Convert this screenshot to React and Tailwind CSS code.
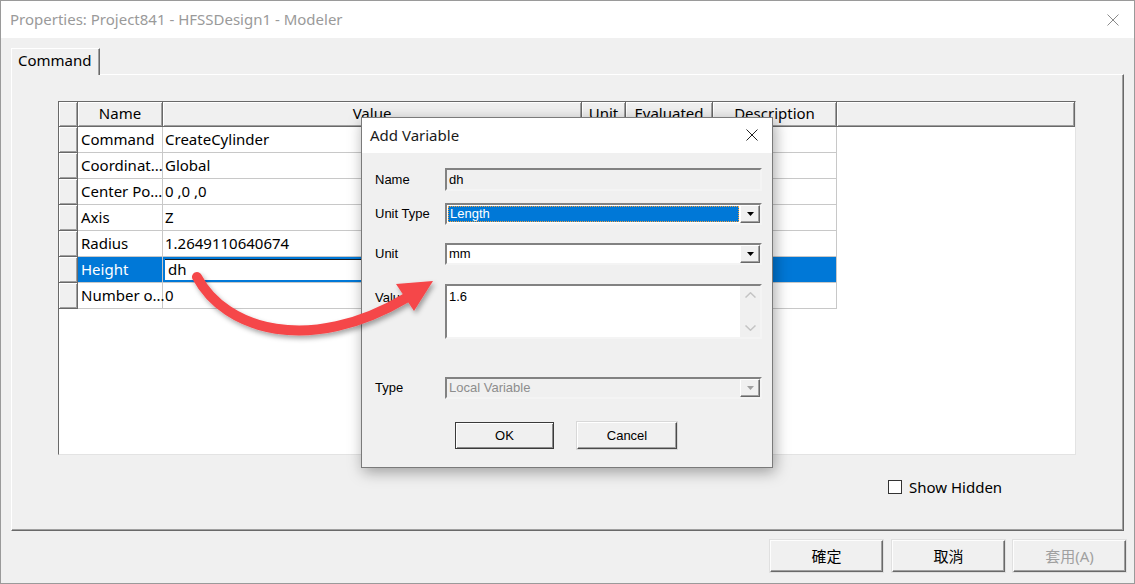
import React from 'react';

const rows = [
  ['Command', 'CreateCylinder'],
  ['Coordinat...', 'Global'],
  ['Center Po...', '0 ,0 ,0'],
  ['Axis', 'Z'],
  ['Radius', '1.2649110640674'],
  ['Height', 'dh', true],
  ['Number o...', '0'],
];

const headers = ['', 'Name', 'Value', 'Unit', 'Evaluated', 'Description', ''];

const raised =
  'bg-[#f0f0f0] border-r border-b border-[#696969] shadow-[inset_1px_1px_0_#fff,inset_-1px_-1px_0_#a0a0a0]';
const sunken = 'border-2 border-t-[#828282] border-l-[#828282] border-b-[#f4f4f4] border-r-[#f4f4f4]';

const CloseX = ({ color, size = 12 }) => (
  <svg width={size} height={size} viewBox="0 0 12 12">
    <line x1="0.5" y1="0.5" x2="11.5" y2="11.5" stroke={color} strokeWidth="1" />
    <line x1="11.5" y1="0.5" x2="0.5" y2="11.5" stroke={color} strokeWidth="1" />
  </svg>
);

const DropButton = ({ disabled }) => (
  <div className="w-[20px] h-full flex items-center justify-center bg-[#f0f0f0] border border-t-white border-l-white border-r-[#696969] border-b-[#696969] shadow-[inset_-1px_-1px_0_#a0a0a0]">
    <svg width="7" height="4" viewBox="0 0 7 4">
      <polygon points="0,0 7,0 3.5,4" fill={disabled ? '#a0a0a0' : '#000'} />
    </svg>
  </div>
);

const DialogRow = ({ label, top, children, alignTop }) => (
  <div className={`flex ${alignTop ? 'items-start' : 'items-center'} ${top}`}>
    <div className={`w-[70px] text-[13px] text-black ${alignTop ? 'pt-[4px]' : ''}`}>{label}</div>
    {children}
  </div>
);

const AddVariable = () => (
  <div className="absolute left-[360px] top-[116px] w-[412px] h-[351px] flex flex-col bg-[#f0f0f0] border border-[#7a7a7a] shadow-[2px_4px_14px_rgba(0,0,0,0.35)] z-10">
    <div className="h-[35px] bg-white flex items-center justify-between pl-[8px] pr-[14px] pb-px">
      <span className="text-[15px] text-[#1a1a1a]">Add Variable</span>
      <CloseX color="#222" />
    </div>
    <div className="flex flex-col pl-[13px] font-['Liberation_Sans',Arial,sans-serif]">
      <DialogRow label="Name" top="mt-[15px]">
        <div className={`w-[317px] h-[23px] ${sunken} bg-[#f0f0f0] flex items-center px-[2px] text-[13px]`}>dh</div>
      </DialogRow>
      <DialogRow label="Unit Type" top="mt-[12px]">
        <div className={`w-[317px] h-[22px] ${sunken} bg-white flex`}>
          <div className="flex-1 m-px bg-[#0078d7] border border-dotted border-[#f0a040] flex items-center px-px text-[13px] text-white">
            Length
          </div>
          <DropButton />
        </div>
      </DialogRow>
      <DialogRow label="Unit" top="mt-[18px]">
        <div className={`w-[317px] h-[22px] ${sunken} bg-white flex`}>
          <div className="flex-1 flex items-center px-[2px] text-[13px]">mm</div>
          <DropButton />
        </div>
      </DialogRow>
      <DialogRow label="Value" top="mt-[19px]" alignTop>
        <div className={`w-[317px] h-[55px] ${sunken} bg-white flex`}>
          <div className="flex-1 px-[2px] pt-[3px] text-[13px] leading-[15px]">1.6</div>
          <div className="w-[20px] bg-[#f0f0f0] flex flex-col items-center justify-between py-[6px]">
            <svg width="11" height="6" viewBox="0 0 11 6">
              <polyline points="0.5,5.5 5.5,0.8 10.5,5.5" fill="none" stroke="#c4c4c4" strokeWidth="1.5" />
            </svg>
            <svg width="11" height="6" viewBox="0 0 11 6">
              <polyline points="0.5,0.5 5.5,5.2 10.5,0.5" fill="none" stroke="#c4c4c4" strokeWidth="1.5" />
            </svg>
          </div>
        </div>
      </DialogRow>
      <DialogRow label="Type" top="mt-[38px]">
        <div className={`w-[317px] h-[22px] ${sunken} bg-[#f0f0f0] flex`}>
          <div className="flex-1 flex items-center px-[2px] text-[13px] text-[#8d8d8d]">Local Variable</div>
          <DropButton disabled />
        </div>
      </DialogRow>
      <div className="mt-[23px] flex gap-[23px] pl-[80px]">
        <button className="w-[99px] h-[27px] bg-[#f0f0f0] border border-[#3a3a3a] shadow-[inset_1px_1px_0_#fff,inset_-1px_-1px_0_#8a8a8a] text-[13px]">
          OK
        </button>
        <button className="w-[100px] h-[27px] bg-[#f0f0f0] border border-t-white border-l-white border-r-[#4a4a4a] border-b-[#4a4a4a] shadow-[inset_-1px_-1px_0_#a0a0a0,0_0_0_1px_#d8d8d8] text-[13px]">
          Cancel
        </button>
      </div>
    </div>
  </div>
);

const PropertyGrid = () => (
  <div className="ml-[46px] mt-[26px] w-[1018px] h-[354px] bg-white border border-t-[#696969] border-l-[#696969] border-r-[#e3e3e3] border-b-[#e3e3e3] overflow-hidden">
    <div className="grid grid-cols-[19px_85px_419px_44px_87px_124px_1fr] text-[15px] text-black">
      {headers.map((h, i) => (
        <div key={i} className={`h-[25px] ${raised} flex items-center justify-center pb-px overflow-hidden whitespace-nowrap`}>
          {h}
        </div>
      ))}
      {rows.map(([name, value, active]) => (
        <React.Fragment key={name}>
          <div className={`h-[26px] ${raised}`} />
          <div
            className={`h-[26px] border-r border-b border-[#c8c8c8] px-[3px] flex items-center whitespace-nowrap ${
              active ? 'bg-[#0078d7] text-white' : ''
            }`}
          >
            {name}
          </div>
          {active ? (
            <div className="h-[26px] border-b border-[#c8c8c8] flex">
              <div className="flex-1 border-2 border-[#0078d7] shadow-[inset_0_1px_0_#1a1a1a] px-[3px] flex items-center">{value}</div>
            </div>
          ) : (
            <div className="h-[26px] border-r border-b border-[#c8c8c8] px-[2px] flex items-center whitespace-nowrap">{value}</div>
          )}
          <div className={`h-[26px] border-r border-b border-[#c8c8c8] ${active ? 'bg-[#0078d7]' : ''}`} />
          <div className={`h-[26px] border-r border-b border-[#c8c8c8] ${active ? 'bg-[#0078d7]' : ''}`} />
          <div className={`h-[26px] border-r border-b border-[#c8c8c8] ${active ? 'bg-[#0078d7]' : ''}`} />
          <div className="h-[26px]" />
        </React.Fragment>
      ))}
    </div>
  </div>
);

const BottomButton = ({ children, disabled, className = '' }) => (
  <button
    className={`w-[113px] h-[32px] bg-[#f0f0f0] border border-t-[#fdfdfd] border-l-[#fdfdfd] border-r-[#696969] border-b-[#696969] shadow-[inset_-1px_-1px_0_#a0a0a0,0_0_0_1px_#e0e0e0] text-[15px] font-['Noto_Sans','Noto_Sans_CJK_TC',sans-serif] ${
      disabled ? 'text-[#a0a0a0]' : 'text-black'
    } ${className}`}
  >
    {children}
  </button>
);

export default function App() {
  return (
    <div className="relative w-[1135px] h-[584px] overflow-hidden bg-[#f0f0f0] border border-[#9a9a9a] flex flex-col font-['Noto_Sans','Noto_Sans_CJK_TC',sans-serif]">
      <div className="h-[37px] shrink-0 bg-white flex items-center justify-between pl-[9px] pr-[15px]">
        <span className="text-[15px] text-[#9a9a9a]">Properties: Project841 - HFSSDesign1 - Modeler</span>
        <CloseX color="#8a8a8a" />
      </div>

      <div className="flex flex-col px-[10px] pt-[10px]">
        <div className="relative z-[1] -mb-px w-[89px] h-[27px] bg-[#f0f0f0] border-t border-l border-r border-t-white border-l-white border-r-[#696969] shadow-[inset_-1px_0_0_#a0a0a0] px-[6px] pb-[3px] flex items-center text-[15px] text-black">
          Command
        </div>
        <div className="w-[1113px] h-[457px] flex flex-col border border-t-white border-l-white border-r-[#696969] border-b-[#696969] shadow-[inset_-1px_-1px_0_#a0a0a0]">
          <PropertyGrid />
          <div className="mt-[21px] pl-[876px] flex items-center gap-[7px]">
            <div className="w-[14px] h-[14px] bg-white border border-[#333]" />
            <span className="text-[15px] text-black">Show Hidden</span>
          </div>
        </div>
        <div className="mt-[9px] -mr-[2px] flex justify-end">
          <BottomButton className="mr-[9px]">確定</BottomButton>
          <BottomButton className="mr-[8px]">取消</BottomButton>
          <BottomButton disabled>套用(A)</BottomButton>
        </div>
      </div>

      <AddVariable />

      <svg className="absolute left-[-1px] top-[-1px] z-20 pointer-events-none" width="1135" height="584" viewBox="0 0 1135 584">
        <defs>
          <filter id="arrowShadow" x="-20%" y="-20%" width="140%" height="160%">
            <feDropShadow dx="2" dy="3" stdDeviation="2.5" floodColor="#000" floodOpacity="0.35" />
          </filter>
        </defs>
        <g filter="url(#arrowShadow)" fill="#f54649">
          <path d="M197 277 C 225 330, 310 355, 406 298" fill="none" stroke="#f54649" strokeWidth="10" strokeLinecap="round" />
          <polygon points="396,284 433,281 414,311" />
        </g>
      </svg>
    </div>
  );
}
